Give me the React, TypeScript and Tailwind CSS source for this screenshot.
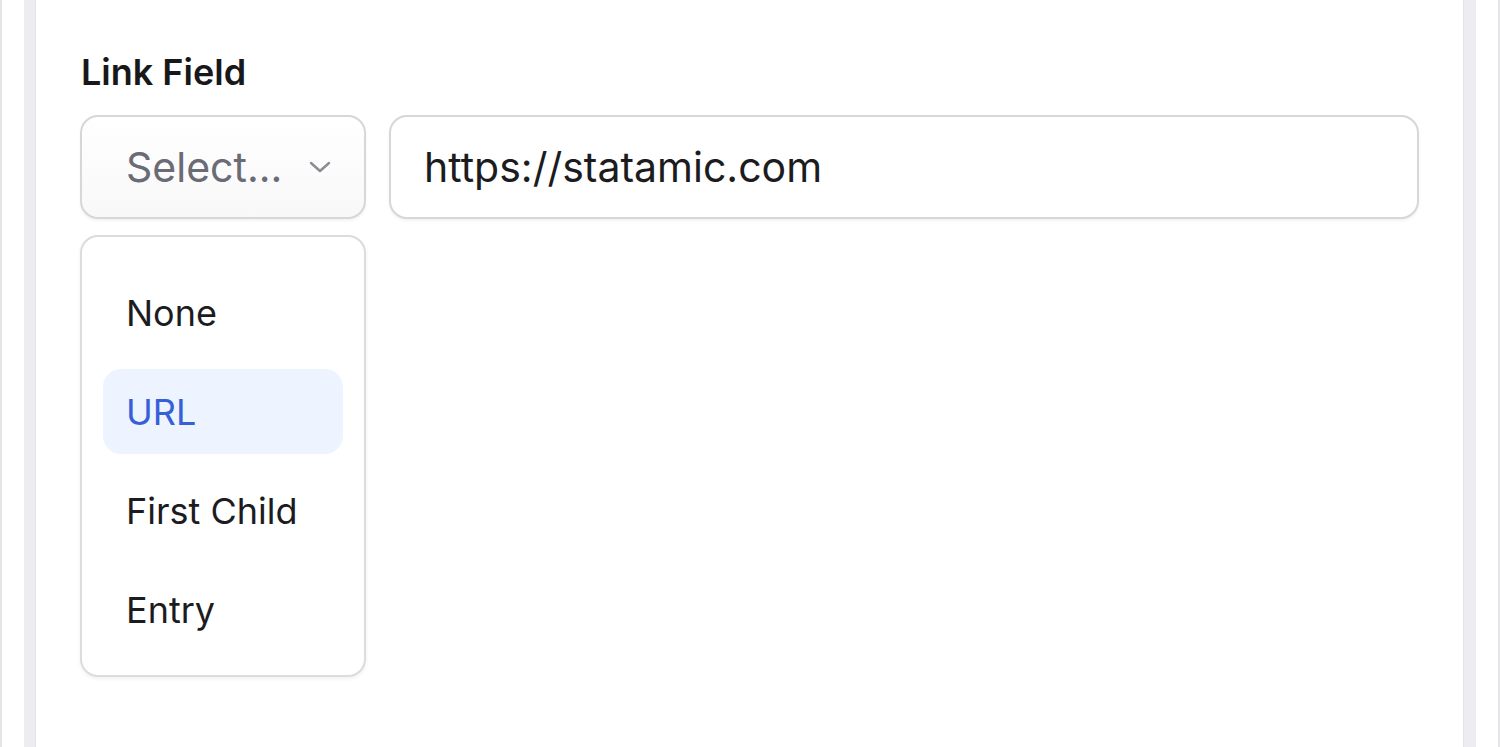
import React from 'react';

const options = ['None', 'URL', 'First Child', 'Entry'];

function Chevron() {
  return (
    <svg width="22" height="12" viewBox="0 0 22 12" fill="none" className="text-[#8b8b94]">
      <path d="M2 2l9 8 9-8" stroke="currentColor" strokeWidth="2.4" strokeLinecap="round" strokeLinejoin="round" />
    </svg>
  );
}

function App() {
  return (
    <div className="h-[747px] w-full bg-white flex font-['Inter',sans-serif] overflow-hidden">
      {/* left frame */}
      <div className="w-[2px] bg-[#e4e4e9]" />
      <div className="w-[22px] bg-white" />
      <div className="w-[12px] bg-[#ededf1] border-r border-[#e2e2e7]" />

      {/* panel */}
      <div className="flex-1 bg-white px-[44px] pt-[49px]">
        <label className="block text-[36px] font-semibold text-[#18181b] leading-[46px] mb-[20px] ml-[1px]">
          Link Field
        </label>

        <div className="flex gap-[23px] items-start">
          <div className="w-[286px] flex flex-col gap-[16px]">
            {/* select */}
            <div className="h-[104px] rounded-[18px] border-2 border-[#d6d6db] bg-gradient-to-b from-white to-[#f8f8f9] shadow-[0_2px_3px_rgba(0,0,0,0.05)] flex items-center justify-between pl-[44px] pr-[33px]">
              <span className="text-[41px] text-[#6b6b75] leading-none">Select...</span>
              <Chevron />
            </div>

            {/* dropdown */}
            <div className="rounded-[18px] border-2 border-[#dcdce0] bg-white shadow-[0_2px_4px_rgba(0,0,0,0.06)] px-[21px] pt-[33px] pb-[23px] flex flex-col gap-[14px]">
              {options.map((o) => (
                <div
                  key={o}
                  className={
                    o === 'URL'
                      ? 'h-[85px] rounded-[18px] bg-[#edf4ff] flex items-center pl-[23px] text-[36px] text-[#3560d6]'
                      : 'h-[85px] rounded-[18px] flex items-center pl-[23px] text-[36px] text-[#1c1c1f]'
                  }
                >
                  {o}
                </div>
              ))}
            </div>
          </div>

          {/* input */}
          <div className="flex-1 h-[104px] rounded-[18px] border-2 border-[#d6d6db] bg-white shadow-[0_2px_3px_rgba(0,0,0,0.05)] flex items-center pl-[33px]">
            <span className="text-[41px] text-[#1c1c1f] leading-none">https://statamic.com</span>
          </div>
        </div>
      </div>

      {/* right frame */}
      <div className="w-[13px] bg-[#ededf1] border-l border-[#e2e2e7]" />
      <div className="w-[22px] bg-white" />
      <div className="w-[2px] bg-[#e4e4e9]" />
    </div>
  );
}

export default App;
